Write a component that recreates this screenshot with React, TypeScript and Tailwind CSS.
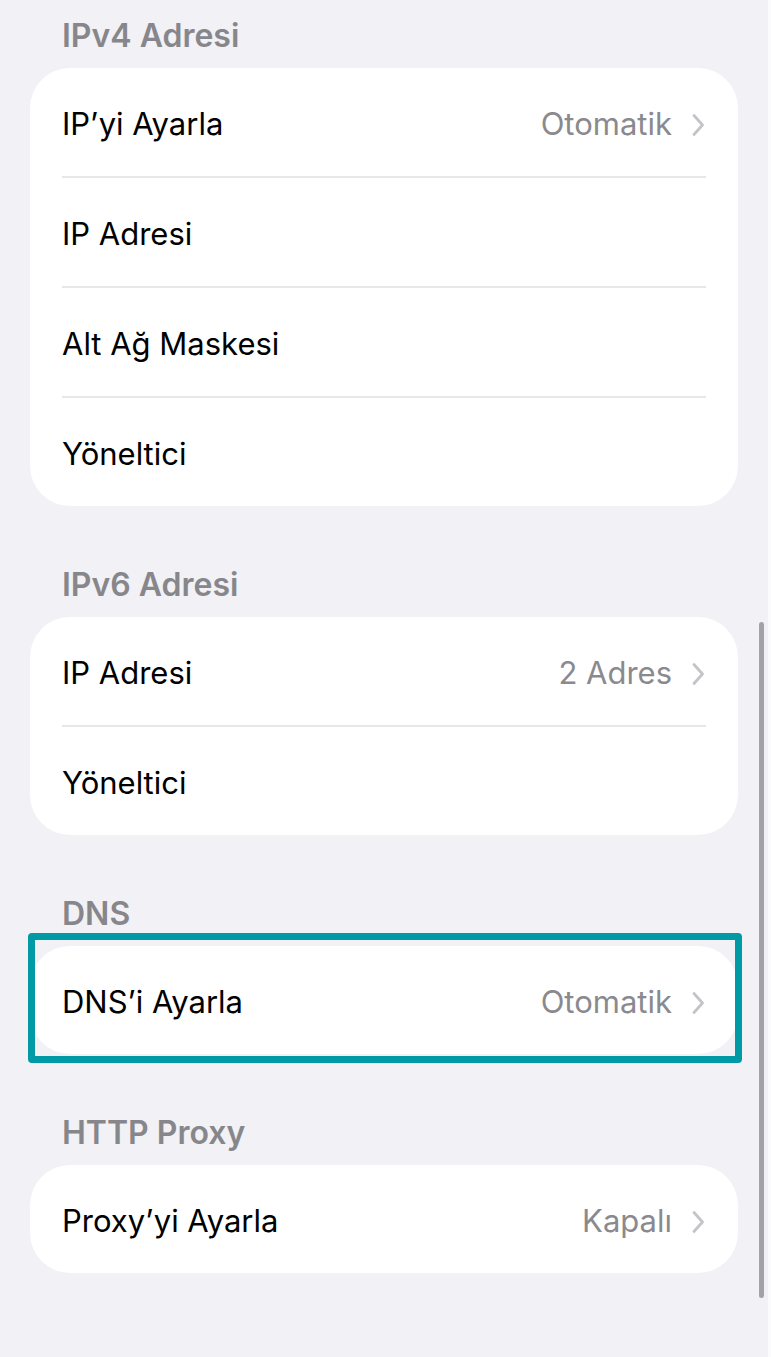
import { FC } from "react";

type Row = { label: string; value?: string };

const SECTIONS: { title: string; rows: Row[]; highlight?: boolean }[] = [
  {
    title: "IPv4 Adresi",
    rows: [
      { label: "IP’yi Ayarla", value: "Otomatik" },
      { label: "IP Adresi" },
      { label: "Alt Ağ Maskesi" },
      { label: "Yöneltici" },
    ],
  },
  {
    title: "IPv6 Adresi",
    rows: [{ label: "IP Adresi", value: "2 Adres" }, { label: "Yöneltici" }],
  },
  {
    title: "DNS",
    rows: [{ label: "DNS’i Ayarla", value: "Otomatik" }],
    highlight: true,
  },
  {
    title: "HTTP Proxy",
    rows: [{ label: "Proxy’yi Ayarla", value: "Kapalı" }],
  },
];

const Chevron: FC = () => (
  <svg width="13" height="24" viewBox="0 0 13 24" fill="none">
    <path
      d="M2 2.5 L10.5 12 L2 21.5"
      stroke="#c4c4c8"
      strokeWidth="2.8"
      strokeLinecap="round"
      strokeLinejoin="round"
    />
  </svg>
);

const SettingsRow: FC<{ row: Row }> = ({ row }) => (
  <div className="flex h-[108px] items-center justify-between pt-[5px] pl-[32px] pr-[33px]">
    <span className="text-[31px] text-black">{row.label}</span>
    {row.value && (
      <div className="flex items-center gap-[20px]">
        <span className="text-[31px] text-[#8a8a8e]">{row.value}</span>
        <Chevron />
      </div>
    )}
  </div>
);

export default function App() {
  return (
    <div
      className="relative h-[1357px] w-[771px] overflow-hidden border-r-[3px] border-[#fbfbfd] bg-[#f1f1f6] pt-[18px]"
      style={{ fontFamily: "Inter, 'Noto Sans', sans-serif" }}
    >
      <div className="flex flex-col gap-[61px]">
        {SECTIONS.map((section) => (
          <section key={section.title} className="flex flex-col gap-[14px]">
            <h2 className="pl-[62px] text-[32px] leading-[36px] font-semibold text-[#87878b]">
              {section.title}
            </h2>
            <div className="relative mx-[30px] w-[708px]">
              <div className="overflow-hidden rounded-[40px] bg-white">
                {section.rows.map((row, i) => (
                  <div key={row.label}>
                    {i > 0 && <div className="ml-[32px] mr-[32px] h-[2px] bg-[#e6e6eb]" />}
                    <SettingsRow row={row} />
                  </div>
                ))}
              </div>
              {section.highlight && (
                <div className="pointer-events-none absolute -top-[13px] -right-[4px] -bottom-[9px] -left-[2px] rounded-[4px] border-[7px] border-[#0099a6]" />
              )}
            </div>
          </section>
        ))}
      </div>

      {/* scroll indicator */}
      <div className="absolute top-[622px] left-[759px] h-[676px] w-[5px] rounded-full bg-[#a2a2a7]" />
    </div>
  );
}
